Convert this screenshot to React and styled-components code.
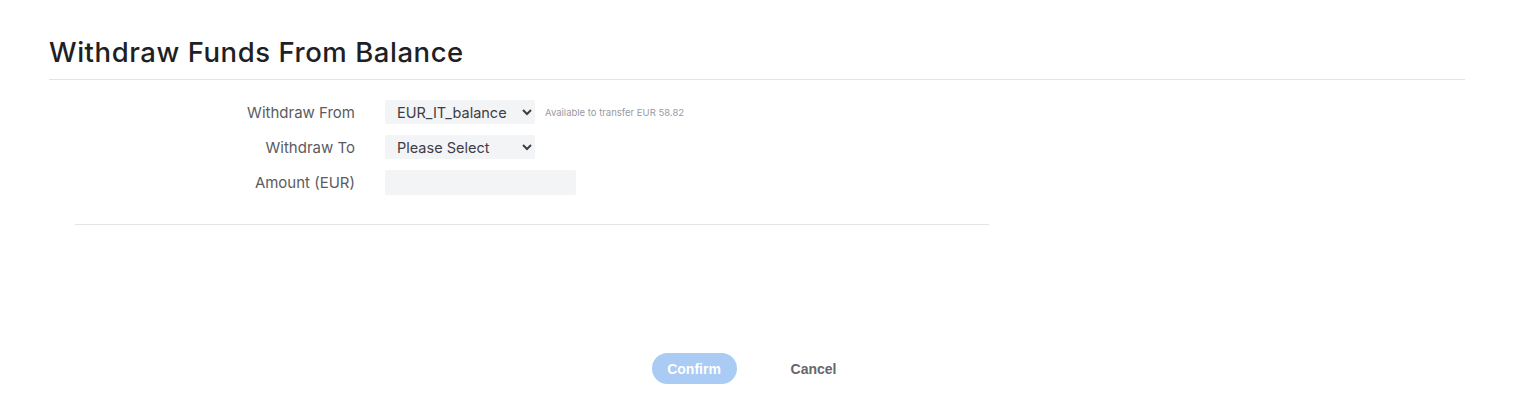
import React, { useState } from 'react';
import styled, { createGlobalStyle } from 'styled-components';

const GlobalStyle = createGlobalStyle`
  body {
    margin: 0;
    background: #ffffff;
    font-family: Inter, "Noto Sans", sans-serif;
  }
`;

const Page = styled.div`
  padding: 35px 57px 0 49px;
  height: 416px;
  box-sizing: border-box;
`;

const Title = styled.h1`
  margin: 0;
  font-size: 27.5px;
  font-weight: 500;
  color: #1f1f24;
  letter-spacing: 0.55px;
  line-height: 35px;
  padding-bottom: 9px;
  border-bottom: 1px solid #e4e4e4;
`;

const FormArea = styled.div`
  margin: 20px 0 0 26px;
  width: 914px;
  border-bottom: 1px solid #e4e4e4;
  padding-bottom: 29px;
  display: flex;
  flex-direction: column;
  gap: 11px;
`;

const Row = styled.div`
  display: grid;
  grid-template-columns: 280px 30px auto;
  align-items: center;
`;

const Label = styled.label`
  text-align: right;
  font-size: 15px;
  color: #5b5b62;
`;

const SelectBox = styled.select`
  width: 150px;
  height: 24px;
  border: none;
  border-radius: 2px;
  background: #f3f4f6;
  color: #3d3d45;
  font-family: Inter, "Noto Sans", sans-serif;
  font-size: 14.5px;
  padding: 0 6px 0 8px;
  outline: none;
`;

const AmountInput = styled.input`
  width: 191px;
  height: 25px;
  box-sizing: border-box;
  border: none;
  border-radius: 2px;
  background: #f3f4f6;
  outline: none;
  font-family: Inter, "Noto Sans", sans-serif;
`;

const FieldWrap = styled.div`
  grid-column: 3;
  display: flex;
  align-items: center;
  gap: 10px;
`;

const Hint = styled.span`
  font-size: 9.5px;
  color: #9a9aa0;
`;

const Actions = styled.div`
  display: flex;
  justify-content: center;
  align-items: center;
  gap: 47px;
  margin-top: 128px;
  padding-right: 19px;
`;

const Button = styled.button`
  font-family: "Liberation Sans", Arial, sans-serif;
  font-weight: 700;
  font-size: 14px;
  height: 31px;
  border: none;
  cursor: pointer;
  background: ${p => (p.$primary ? '#a9cbf4' : 'transparent')};
  color: ${p => (p.$primary ? '#ffffff' : '#66666d')};
  border-radius: 16px;
  padding: 0 ${p => (p.$primary ? '14px' : '7px')};
  min-width: ${p => (p.$primary ? '85px' : '0')};
`;

const App = () => {
  const [from, setFrom] = useState('EUR_IT_balance');
  const [to, setTo] = useState('');
  const [amount, setAmount] = useState('');

  return (
    <>
      <GlobalStyle />
      <Page>
        <Title>Withdraw Funds From Balance</Title>
        <FormArea>
          <Row>
            <Label>Withdraw From</Label>
            <FieldWrap>
              <SelectBox value={from} onChange={e => setFrom(e.target.value)}>
                <option value="EUR_IT_balance">EUR_IT_balance</option>
              </SelectBox>
              <Hint>Available to transfer EUR 58.82</Hint>
            </FieldWrap>
          </Row>
          <Row>
            <Label>Withdraw To</Label>
            <FieldWrap>
              <SelectBox value={to} onChange={e => setTo(e.target.value)}>
                <option value="">Please Select</option>
              </SelectBox>
            </FieldWrap>
          </Row>
          <Row>
            <Label>Amount (EUR)</Label>
            <FieldWrap>
              <AmountInput value={amount} onChange={e => setAmount(e.target.value)} />
            </FieldWrap>
          </Row>
        </FormArea>
        <Actions>
          <Button $primary disabled>Confirm</Button>
          <Button>Cancel</Button>
        </Actions>
      </Page>
    </>
  );
};

export default App;
